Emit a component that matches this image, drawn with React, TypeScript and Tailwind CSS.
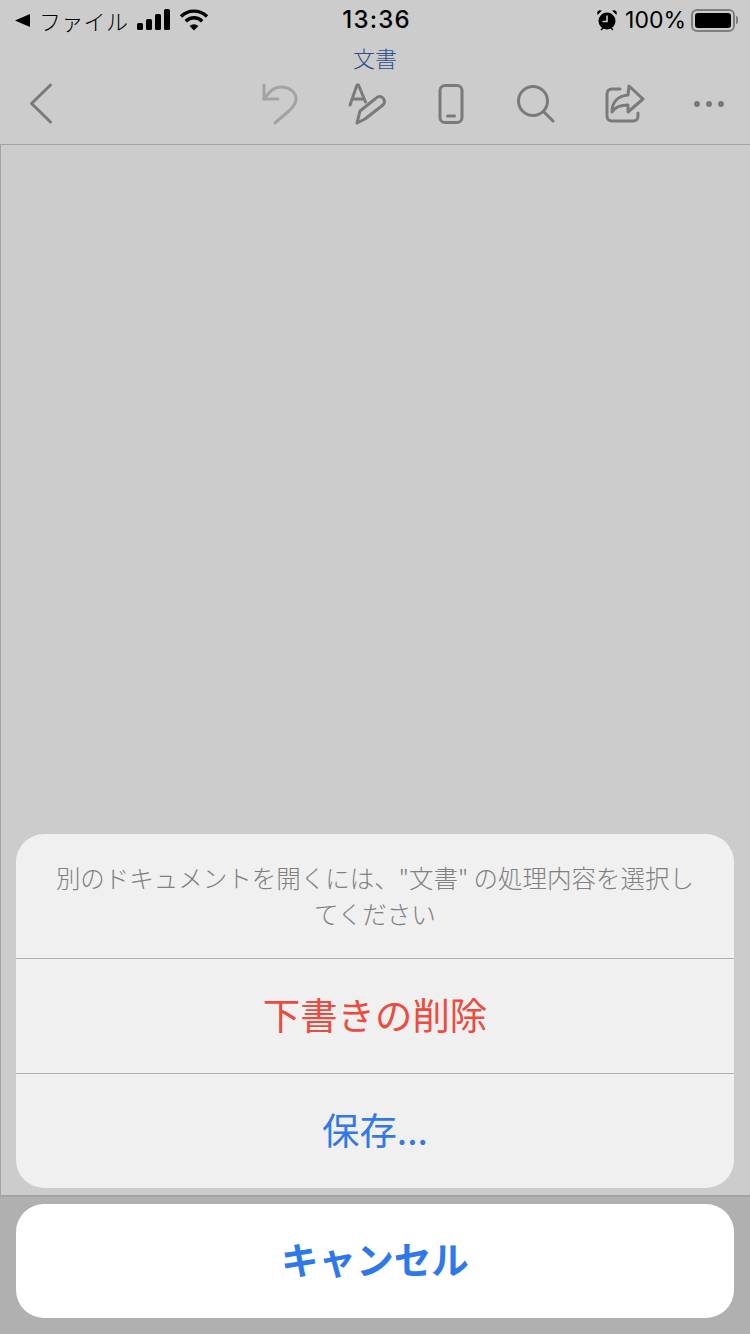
const cjk = "font-['Noto_Sans_CJK_JP','Noto_Sans',sans-serif]";

function StatusBar() {
  return (
    <div className="flex h-10 items-center pl-[15px] pr-[12px] text-black">
      <div className="flex flex-1 items-center">
        <svg width="16" height="16" viewBox="0 0 16 16">
          <path d="M0 8.500 15 2v13z" fill="#000" />
        </svg>
        <span className={`${cjk} ml-[8px] text-[22px] leading-none font-light tracking-[0.3px]`}>ファイル</span>
        <svg className="ml-[9px]" width="34" height="22" viewBox="0 0 34 22" fill="#000">
          <rect x="0" y="14" width="6" height="7" rx="1.5" />
          <rect x="9" y="10" width="6" height="11" rx="1.5" />
          <rect x="18" y="5" width="6" height="16" rx="1.5" />
          <rect x="27" y="0" width="6" height="21" rx="1.5" />
        </svg>
        <svg className="ml-[8px]" width="30" height="22" viewBox="0 0 30 22" fill="none">
          <path d="M2 7.500a18.500 18.500 0 0 1 26 0" stroke="#000" strokeWidth="3.4" />
          <path d="M6.800 12.200a11.600 11.600 0 0 1 16.400 0" stroke="#000" strokeWidth="3.4" />
          <path d="M15 21.500 10.600 17a6.300 6.300 0 0 1 8.800 0z" fill="#000" />
        </svg>
      </div>
      <span className="font-['Inter',sans-serif] text-[24px] leading-none font-medium tracking-[1.2px]">13:36</span>
      <div className="flex flex-1 items-center justify-end">
        <svg width="22" height="22" viewBox="0 0 22 22" fill="#000">
          <circle cx="11" cy="12" r="8.500" />
          <path d="M1.500 6 6 1.500 3 1.200 1.200 3zM20.500 6 16 1.500l3-.3L20.800 3zM4.500 20.500l2-2 1 1-2 2zM17.500 20.500l-2-2-1 1 2 2z" />
          <path d="M11 6.500V12.500H6.500" stroke="#ccc" strokeWidth="1.600" fill="none" />
        </svg>
        <span className="ml-[7px] font-['Inter',sans-serif] text-[23px] leading-none">100%</span>
        <div className="ml-[5px] flex items-center">
          <div className="h-[23px] w-[44px] rounded-[6px] border-2 border-[#7f7f7f] p-[2px]">
            <div className="h-full w-full rounded-[3px] bg-black" />
          </div>
          <div className="ml-[1px] h-[8px] w-[2px] rounded-r-sm bg-[#7f7f7f]" />
        </div>
      </div>
    </div>
  );
}

function Toolbar() {
  const s = { fill: "none", stroke: "#7a7a7a", strokeWidth: 3, strokeLinecap: "round" as const, strokeLinejoin: "round" as const };
  return (
    <div className="flex h-[44px] items-start pl-[28px]">
      <svg width="28" height="44" viewBox="0 0 28 44" {...s}>
        <path d="M22.500 3 3.500 21.500 22.500 40" />
      </svg>
      <svg className="ml-[204px]" width="40" height="44" viewBox="0 0 40 44" fill="none" stroke="#a3a3a3" strokeWidth="3" strokeLinecap="round" strokeLinejoin="round">
        <path d="M4 3v14h14" />
        <path d="M4 17C10 9 14 5 21 5c8 0 15 5 15 12 0 5-3 8-6 11L15 41" />
      </svg>
      <svg className="ml-[46px]" width="42" height="44" viewBox="0 0 42 44" {...s}>
        <path d="M4 23 11 3h1.500l7 17M6.500 17h11" />
        <path d="M11 41l3-12L29 17c3-3 6-3 8-1s2 5 0 7L19 37z" />
      </svg>
      <svg className="ml-[50px]" width="26" height="44" viewBox="0 0 26 44" {...s}>
        <rect x="2" y="3.500" width="22" height="37" rx="5" />
        <path d="M9.500 34h7" />
      </svg>
      <svg className="ml-[53px]" width="40" height="44" viewBox="0 0 40 44" {...s}>
        <circle cx="16" cy="19" r="14.500" />
        <path d="M27 30l9 9" />
      </svg>
      <svg className="ml-[47px]" width="42" height="44" viewBox="0 0 42 44" {...s}>
        <path d="M16 7H8c-3 0-5 2-5 5v22c0 3 2 5 5 5h21c3 0 5-2 5-5v-3" />
        <path d="M25 4l14 13-15 13v-7C17 23 11 25 8 30c0-10 6-16 16-17z" />
      </svg>
      <div className="ml-[48px] mt-[19px] flex gap-[6px]">
        <div className="h-[6px] w-[6px] rounded-full bg-[#7a7a7a]" />
        <div className="h-[6px] w-[6px] rounded-full bg-[#7a7a7a]" />
        <div className="h-[6px] w-[6px] rounded-full bg-[#7a7a7a]" />
      </div>
    </div>
  );
}

export default function App() {
  return (
    <div className={`${cjk} relative flex h-[1334px] w-[750px] flex-col overflow-hidden bg-[#cccccc]`}>
      {/* header */}
      <div className="h-[144px]">
        <StatusBar />
        <div className="h-[42px] pt-[4px] text-center text-[22px] leading-[26px] font-light text-[#2e4f8e]">文書</div>
        <Toolbar />
      </div>

      {/* document page */}
      <div className="h-[1053px] border-t border-b-2 border-l border-[#a3a3a3] bg-[#cccccc]" />

      {/* bottom strip behind cancel */}
      <div className="flex-1 bg-[#b0b0b0]" />

      {/* action sheet */}
      <div className="absolute bottom-[16px] left-[16px] right-[16px] flex flex-col gap-[16px]">
        <div className="overflow-hidden rounded-[28px] bg-[#f0f0f0]">
          <div className="flex h-[125px] items-start justify-center border-b border-[#aeaeae] px-[36px] pt-[26px] text-center leading-[36px] font-light text-[#808080]">
            <p className="text-[24.5px]">別のドキュメントを開くには、"文書" の処理内容を選択してください</p>
          </div>
          <div className="flex h-[115px] items-center justify-center border-b border-[#aeaeae] pb-[3px] text-[37.400px] text-[#ea4c3f]">下書きの削除</div>
          <div className="flex h-[114px] items-center justify-center pb-[3px] text-[37.400px] text-[#3478e5]">保存...</div>
        </div>
        <div className="flex h-[114px] items-center justify-center rounded-[28px] bg-white pb-[5px] text-[37.600px] font-bold text-[#2f78ea]">キャンセル</div>
      </div>
    </div>
  );
}
